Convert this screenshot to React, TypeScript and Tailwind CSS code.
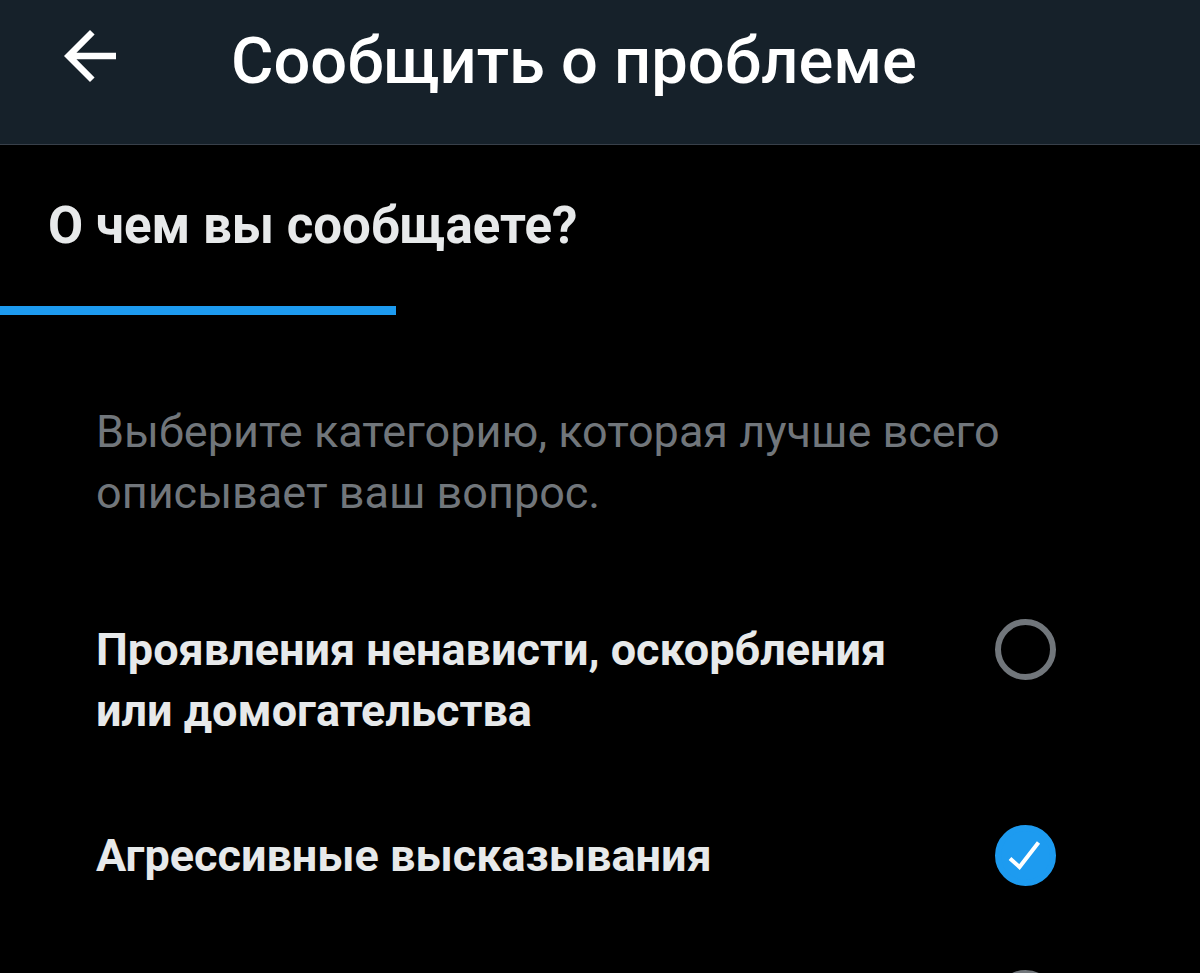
import { useState } from 'react';

const categories = [
  { id: 'hate', label: 'Проявления ненависти, оскорбления или домогательства' },
  { id: 'violent', label: 'Агрессивные высказывания' },
  { id: 'other', label: '' },
];

const BackArrow = () => (
  <svg viewBox="4 4 16 16" className="block h-[52px] w-[52px]" aria-hidden="true">
    <path
      d="M20 11H7.83l5.59-5.59L12 4l-8 8 8 8 1.41-1.41L7.83 13H20v-2z"
      fill="#ffffff"
    />
  </svg>
);

type CategoryOptionProps = {
  id: string;
  label: string;
  checked: boolean;
  onSelect: (id: string) => void;
};

const CategoryOption = ({ id, label, checked, onSelect }: CategoryOptionProps) => {
  return (
    <label
      htmlFor={id}
      className="flex cursor-pointer items-start justify-between text-[#e7e9ea]"
    >
      <span className="max-w-[820px] text-[45px] leading-[61px] font-bold">
        {label}
      </span>
      <span className="grid shrink-0 place-items-center">
        <input
          id={id}
          type="radio"
          name="category"
          checked={checked}
          onChange={() => onSelect(id)}
          aria-label={label || 'Другое'}
          className="col-start-1 row-start-1 h-[61px] w-[61px] appearance-none rounded-full border-[6px] border-[#71767b] checked:border-[#1d9bf0] checked:bg-[#1d9bf0]"
        />
        {checked && (
          <svg
            viewBox="0 0 61 61"
            className="pointer-events-none col-start-1 row-start-1 h-[61px] w-[61px]"
            aria-hidden="true"
          >
            <path
              d="M15 33.5l9.5 8.5 19-24.5"
              fill="none"
              stroke="#ffffff"
              strokeWidth="4"
            />
          </svg>
        )}
      </span>
    </label>
  );
};

const App = () => {
  const [selected, setSelected] = useState('violent');

  return (
    <main className="h-screen overflow-hidden bg-black font-[Roboto,sans-serif]">
      <header className="flex items-start border-b border-[#38404a] bg-[#16212a] px-16 pt-[30px] pb-[52px]">
        <button type="button" aria-label="Назад" className="cursor-pointer">
          <BackArrow />
        </button>
        <h1 className="ml-[115px] text-[65px] leading-[62px] font-medium text-white">
          Сообщить о проблеме
        </h1>
      </header>
      <h2 className="px-12 py-12 text-[51px] leading-[65px] font-bold text-[#e7e9ea]">
        О чем вы сообщаете?
      </h2>
      <div className="h-[9px] w-[33%] bg-[#1d9bf0]" />
      <form className="flex flex-col gap-[84px] pt-[86px] pr-36 pl-24">
        <p className="mb-3 text-[45px] leading-[61px] text-[#71767b]">
          Выберите категорию, которая лучше всего описывает ваш вопрос.
        </p>
        {categories.map((category) => (
          <CategoryOption
            key={category.id}
            id={category.id}
            label={category.label}
            checked={selected === category.id}
            onSelect={setSelected}
          />
        ))}
      </form>
    </main>
  );
};

export default App;
